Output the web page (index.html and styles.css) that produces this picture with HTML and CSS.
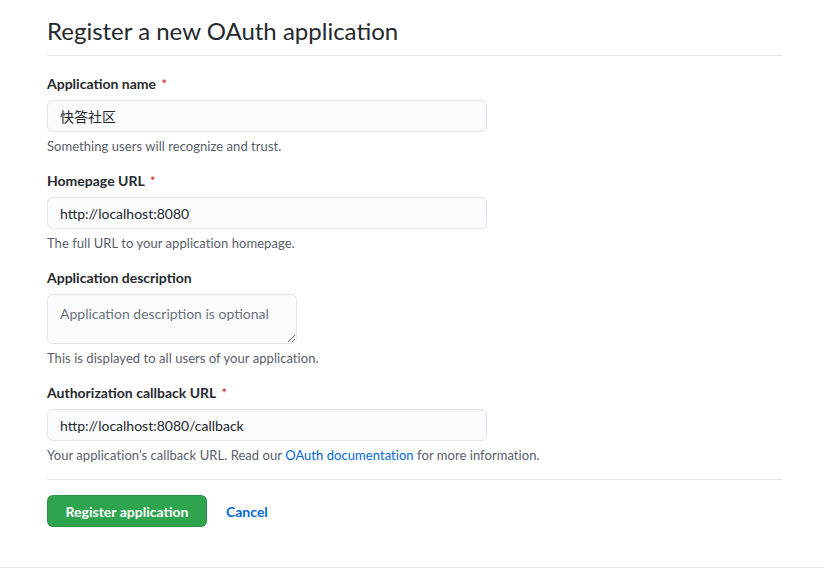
FILE: index.html
```html
<!DOCTYPE html>
<html lang="en">
<head>
<meta charset="utf-8">
<title>Register a new OAuth application</title>
<link rel="stylesheet" href="styles.css">
</head>
<body>
<div class="page">
  <div class="subhead">
    <h2 class="subhead-heading">Register a new OAuth application</h2>
  </div>
  <form class="form">
    <div class="form-group">
      <label class="label" for="name">Application name <span class="req">*</span></label>
      <input class="input" id="name" type="text" value="快答社区">
      <p class="note">Something users will recognize and trust.</p>
    </div>
    <div class="form-group">
      <label class="label" for="home">Homepage URL <span class="req">*</span></label>
      <input class="input" id="home" type="text" value="http://localhost:8080">
      <p class="note">The full URL to your application homepage.</p>
    </div>
    <div class="form-group">
      <label class="label" for="desc">Application description</label>
      <textarea class="textarea" id="desc" placeholder="Application description is optional"></textarea>
      <p class="note">This is displayed to all users of your application.</p>
    </div>
    <div class="form-group">
      <label class="label" for="cb">Authorization callback URL <span class="req">*</span></label>
      <input class="input" id="cb" type="text" value="http://localhost:8080/callback">
      <p class="note">Your application’s callback URL. Read our <a class="link" href="#">OAuth documentation</a> for more information.</p>
    </div>
    <hr class="divider">
    <div class="actions">
      <button class="btn-primary" type="button">Register application</button>
      <a class="btn-link" href="#">Cancel</a>
    </div>
  </form>
</div>
<div class="footer"></div>
</body>
</html>
```

FILE: styles.css
```css
* { box-sizing: border-box; }
html, body { margin: 0; padding: 0; background: #fff; }
body {
  font-family: "Segoe UI", Lato, "Noto Sans CJK SC", sans-serif;
  font-size: 14px;
  line-height: 1.5;
  color: #24292e;
}
.page {
  width: 735px;
  margin-left: 47px;
  padding-top: 13px;
}
.subhead {
  border-bottom: 1px solid #e1e4e8;
  padding-bottom: 6px;
  margin-bottom: 17px;
}
.subhead-heading {
  margin: 0;
  font-size: 24px;
  font-weight: 400;
  line-height: 36px;
}
.form-group { margin-bottom: 15px; }
.label {
  display: block;
  font-weight: 700;
  line-height: 21px;
  margin-bottom: 6px;
}
.req { color: #cb2431; font-weight: 400; margin-left: 2px; }
.input, .textarea {
  display: block;
  font-family: "Segoe UI", Lato, "Noto Sans CJK SC", sans-serif;
  font-size: 14px;
  color: #24292e;
  background: #fafbfc;
  border: 1px solid #e1e4e8;
  border-radius: 6px;
  outline: none;
}
.input {
  width: 440px;
  height: 32px;
  padding: 5px 12px;
  line-height: 20px;
}
.textarea {
  width: 250px;
  height: 50px;
  padding: 9px 12px 5px;
  line-height: 20px;
  resize: vertical;
}
.textarea::placeholder { color: #6a737d; }
.note {
  margin: 5px 0 0;
  font-size: 13px;
  letter-spacing: 0.05px;
  line-height: 18px;
  color: #586069;
}
.link { color: #0366d6; text-decoration: none; }
.divider {
  border: 0;
  border-top: 1px solid #e1e4e8;
  margin: 0 0 15px;
  height: 0;
}
.actions {
  display: flex;
  align-items: center;
  gap: 20px;
}
.btn-primary {
  height: 32px;
  width: 160px;
  padding: 0 16px;
  font-family: "Segoe UI", Lato, sans-serif;
  font-size: 14px;
  font-weight: 700;
  color: #fff;
  background: #2ea44f;
  border: 1px solid rgba(27,31,35,0.15);
  border-radius: 6px;
}
.btn-link {
  color: #0366d6;
  font-weight: 700;
  text-decoration: none;
  margin-left: -1px;
}
.footer {
  margin-top: 40px;
  border-top: 1px solid #e1e4e8;
}
```
